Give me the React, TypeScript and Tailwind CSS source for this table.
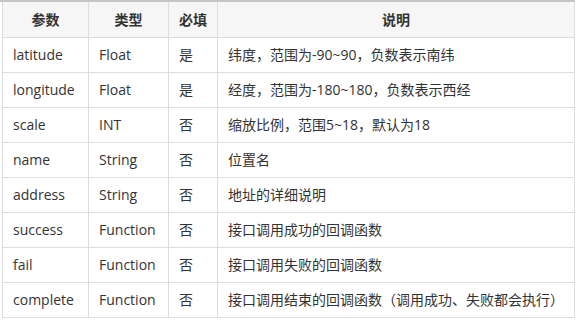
import React from "react";

const rows = [
  ["latitude", "Float", "是", "纬度，范围为-90~90，负数表示南纬"],
  ["longitude", "Float", "是", "经度，范围为-180~180，负数表示西经"],
  ["scale", "INT", "否", "缩放比例，范围5~18，默认为18"],
  ["name", "String", "否", "位置名"],
  ["address", "String", "否", "地址的详细说明"],
  ["success", "Function", "否", "接口调用成功的回调函数"],
  ["fail", "Function", "否", "接口调用失败的回调函数"],
  ["complete", "Function", "否", "接口调用结束的回调函数（调用成功、失败都会执行）"],
];

export default function App() {
  return (
    <div
      className="w-[580px] h-[324px] bg-white text-[14px] text-[#333]"
      style={{ fontFamily: '"Open Sans", "Noto Sans CJK SC", sans-serif' }}
    >
      <div className="w-[575px] border-t-2 border-[#c4c4c4]">
        <table className="ml-[2px] w-[573px] border-collapse table-fixed">
          <colgroup>
            <col className="w-[86px]" />
            <col className="w-[80px]" />
            <col className="w-[49px]" />
            <col />
          </colgroup>
          <thead>
            <tr className="h-[35px] bg-[#f6f6f6]">
              {["参数", "类型", "必填", "说明"].map((h) => (
                <th
                  key={h}
                  className="border border-t-0 border-[#ddd] text-center font-bold px-[10px] p-0"
                >
                  {h}
                </th>
              ))}
            </tr>
          </thead>
          <tbody>
            {rows.map((r) => (
              <tr key={r[0]} className="h-[35px]">
                {r.map((c, i) => (
                  <td
                    key={i}
                    className="border border-[#ddd] px-[10px] py-0 text-left whitespace-nowrap"
                  >
                    {c}
                  </td>
                ))}
              </tr>
            ))}
          </tbody>
        </table>
      </div>
    </div>
  );
}
